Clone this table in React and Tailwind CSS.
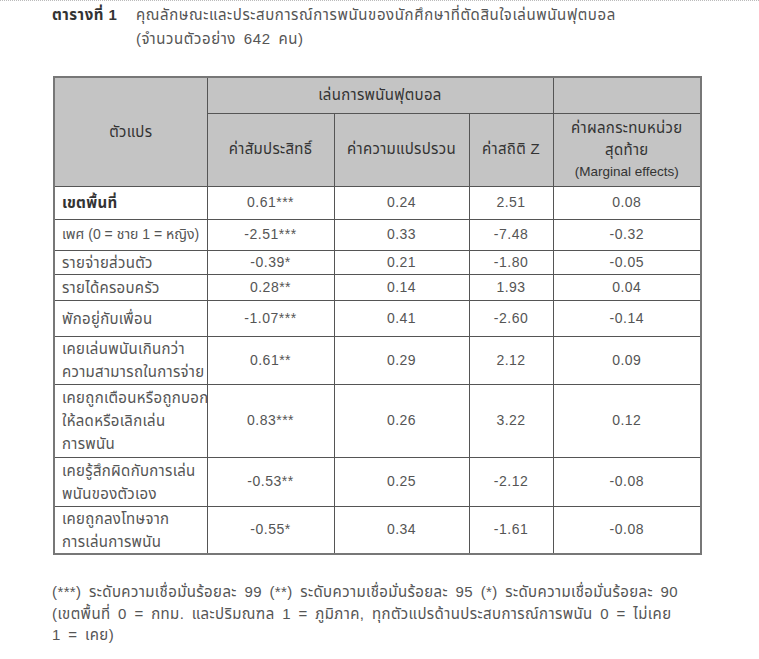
const rows = [
  { label: ["เขตพื้นที่"], bold: true, h: 33, v: ["0.61***", "0.24", "2.51", "0.08"] },
  { label: ["เพศ (0 = ชาย 1 = หญิง)"], tight: true, h: 31, v: ["-2.51***", "0.33", "-7.48", "-0.32"] },
  { label: ["รายจ่ายส่วนตัว"], h: 24, v: ["-0.39*", "0.21", "-1.80", "-0.05"] },
  { label: ["รายได้ครอบครัว"], h: 26, v: ["0.28**", "0.14", "1.93", "0.04"] },
  { label: ["พักอยู่กับเพื่อน"], h: 36, v: ["-1.07***", "0.41", "-2.60", "-0.14"] },
  { label: ["เคยเล่นพนันเกินกว่า", "ความสามารถในการจ่าย"], h: 48, v: ["0.61**", "0.29", "2.12", "0.09"] },
  { label: ["เคยถูกเตือนหรือถูกบอก", "ให้ลดหรือเลิกเล่น", "การพนัน"], h: 73, v: ["0.83***", "0.26", "3.22", "0.12"] },
  { label: ["เคยรู้สึกผิดกับการเล่น", "พนันของตัวเอง"], h: 49, v: ["-0.53**", "0.25", "-2.12", "-0.08"] },
  { label: ["เคยถูกลงโทษจาก", "การเล่นการพนัน"], h: 48, v: ["-0.55*", "0.34", "-1.61", "-0.08"] },
];

const cell = "border border-[#555] p-0";

export default function App() {
  return (
    <div
      className="w-[759px] h-[659px] bg-white border-t border-dotted border-[#bbb] text-[#555] overflow-hidden"
      style={{ fontFamily: '"Liberation Sans", "Noto Sans Thai", "DejaVu Sans", sans-serif' }}
    >
      {/* Caption */}
      <div className="flex pl-[52px] pt-[2px] text-[15px] leading-[24px] whitespace-nowrap">
        <span className="w-[84px] font-bold text-[#333] shrink-0 tracking-[0.5px]">ตารางที่ 1</span>
        <div className="tracking-[0.6px]">
          <div>คุณลักษณะและประสบการณ์การพนันของนักศึกษาที่ตัดสินใจเล่นพนันฟุตบอล</div>
          <div className="[word-spacing:3px]">(จำนวนตัวอย่าง 642 คน)</div>
        </div>
      </div>

      {/* Table */}
      <table className="ml-[53px] mt-[25px] border-collapse border-2 border-[#777] table-fixed w-[647px] text-[14px]">
        <colgroup>
          <col className="w-[153px]" />
          <col className="w-[127px]" />
          <col className="w-[135px]" />
          <col className="w-[84px]" />
          <col className="w-[148px]" />
        </colgroup>
        <thead className="bg-[#c4c4c4] text-[#333] text-[15px] tracking-[0.3px]">
          <tr className="h-[36px]">
            <th rowSpan={2} className={`${cell} font-normal text-center`}>ตัวแปร</th>
            <th colSpan={3} className={`${cell} font-normal text-center`}>เล่นการพนันฟุตบอล</th>
            <th className={cell}></th>
          </tr>
          <tr className="h-[73px]">
            <th className={`${cell} font-normal whitespace-nowrap`}>ค่าสัมประสิทธิ์</th>
            <th className={`${cell} font-normal whitespace-nowrap`}>ค่าความแปรปรวน</th>
            <th className={`${cell} font-normal whitespace-nowrap`}>ค่าสถิติ Z</th>
            <th className={`${cell} font-normal leading-[22px]`}>
              <div>ค่าผลกระทบหน่วย</div>
              <div>สุดท้าย</div>
              <div className="text-[13.5px] tracking-normal">(Marginal effects)</div>
            </th>
          </tr>
        </thead>
        <tbody>
          {rows.map((r, i) => (
            <tr key={i} style={{ height: r.h }}>
              <td
                className={`${cell} pl-[7px] leading-[23px] whitespace-nowrap ${
                  r.tight ? "text-[14px] tracking-normal" : "text-[15px] tracking-[0.3px]"
                } ${r.bold ? "font-bold text-[#333]" : ""}`}
              >
                {r.label.map((l, j) => (
                  <div key={j}>{l}</div>
                ))}
              </td>
              {r.v.map((v, j) => (
                <td key={j} className={`${cell} text-center tracking-[0.5px]`}>{v}</td>
              ))}
            </tr>
          ))}
        </tbody>
      </table>

      {/* Notes */}
      <div className="pl-[52px] pt-[26px] text-[15px] leading-[21.5px] whitespace-nowrap tracking-[0.4px] [word-spacing:3px]">
        <div>(***) ระดับความเชื่อมั่นร้อยละ 99 (**) ระดับความเชื่อมั่นร้อยละ 95 (*) ระดับความเชื่อมั่นร้อยละ 90</div>
        <div>(เขตพื้นที่ 0 = กทม. และปริมณฑล 1 = ภูมิภาค, ทุกตัวแปรด้านประสบการณ์การพนัน 0 = ไม่เคย</div>
        <div>1 = เคย)</div>
      </div>
    </div>
  );
}
